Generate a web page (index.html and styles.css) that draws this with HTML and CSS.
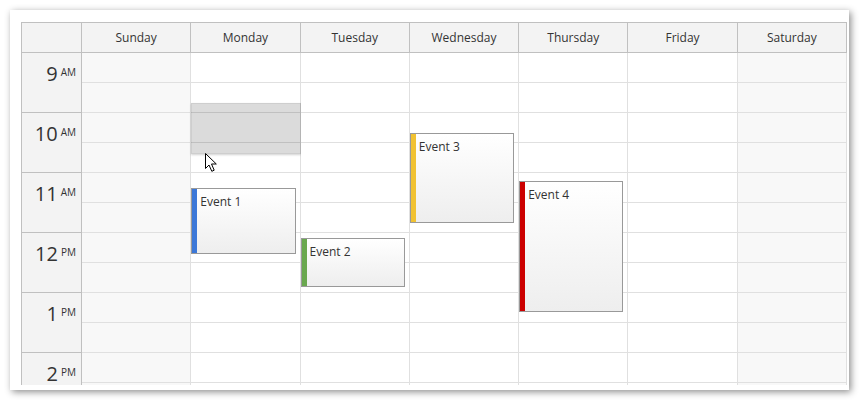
FILE: index.html
```html
<!DOCTYPE html>
<html>
<head>
<meta charset="utf-8">
<link rel="stylesheet" href="styles.css">
</head>
<body>
<div class="frame">
  <div class="cal">
    <div class="header">
      <div class="corner"></div>
      <div class="day-head">Sunday</div>
      <div class="day-head">Monday</div>
      <div class="day-head">Tuesday</div>
      <div class="day-head">Wednesday</div>
      <div class="day-head">Thursday</div>
      <div class="day-head">Friday</div>
      <div class="day-head">Saturday</div>
    </div>
    <div class="body">
      <div class="times">
        <div class="hour"><span class="num">9</span><span class="ampm">AM</span></div>
        <div class="hour"><span class="num">10</span><span class="ampm">AM</span></div>
        <div class="hour"><span class="num">11</span><span class="ampm">AM</span></div>
        <div class="hour"><span class="num">12</span><span class="ampm">PM</span></div>
        <div class="hour"><span class="num">1</span><span class="ampm">PM</span></div>
        <div class="hour"><span class="num">2</span><span class="ampm">PM</span></div>
      </div>
      <div class="day weekend">
        <div class="slot"></div><div class="slot"></div><div class="slot"></div><div class="slot"></div><div class="slot"></div><div class="slot"></div><div class="slot"></div><div class="slot"></div><div class="slot"></div><div class="slot"></div><div class="slot"></div><div class="slot"></div>
      </div>
      <div class="day">
        <div class="slot"></div><div class="slot"></div><div class="slot"></div><div class="slot"></div><div class="slot"></div><div class="slot"></div><div class="slot"></div><div class="slot"></div><div class="slot"></div><div class="slot"></div><div class="slot"></div><div class="slot"></div>
        <div class="selection"></div>
        <div class="event ev1"><span class="bar blue"></span>Event 1</div>
      </div>
      <div class="day">
        <div class="slot"></div><div class="slot"></div><div class="slot"></div><div class="slot"></div><div class="slot"></div><div class="slot"></div><div class="slot"></div><div class="slot"></div><div class="slot"></div><div class="slot"></div><div class="slot"></div><div class="slot"></div>
        <div class="event ev2"><span class="bar green"></span>Event 2</div>
      </div>
      <div class="day">
        <div class="slot"></div><div class="slot"></div><div class="slot"></div><div class="slot"></div><div class="slot"></div><div class="slot"></div><div class="slot"></div><div class="slot"></div><div class="slot"></div><div class="slot"></div><div class="slot"></div><div class="slot"></div>
        <div class="event ev3"><span class="bar yellow"></span>Event 3</div>
      </div>
      <div class="day">
        <div class="slot"></div><div class="slot"></div><div class="slot"></div><div class="slot"></div><div class="slot"></div><div class="slot"></div><div class="slot"></div><div class="slot"></div><div class="slot"></div><div class="slot"></div><div class="slot"></div><div class="slot"></div>
        <div class="event ev4"><span class="bar red"></span>Event 4</div>
      </div>
      <div class="day">
        <div class="slot"></div><div class="slot"></div><div class="slot"></div><div class="slot"></div><div class="slot"></div><div class="slot"></div><div class="slot"></div><div class="slot"></div><div class="slot"></div><div class="slot"></div><div class="slot"></div><div class="slot"></div>
      </div>
      <div class="day weekend">
        <div class="slot"></div><div class="slot"></div><div class="slot"></div><div class="slot"></div><div class="slot"></div><div class="slot"></div><div class="slot"></div><div class="slot"></div><div class="slot"></div><div class="slot"></div><div class="slot"></div><div class="slot"></div>
      </div>
    </div>
  </div>
</div>
<svg class="cursor" width="14" height="21" viewBox="0 0 14 21">
  <path d="M1.5 1.5 L1.5 16.5 L5 13 L7.8 19.3 L10.2 18.2 L7.5 12 L12.3 12 Z" fill="#fff" stroke="#000" stroke-width="1" stroke-linejoin="miter"/>
</svg>
</body>
</html>
```

FILE: styles.css
```css
html, body {
  margin: 0;
  padding: 0;
  background: #fff;
}
body {
  font-family: "Open Sans", "Noto Sans", sans-serif;
  color: #333;
  position: relative;
  width: 860px;
  height: 401px;
  overflow: hidden;
}
.frame {
  margin: 10px 0 0 10px;
  width: 839px;
  height: 380px;
  box-sizing: border-box;
  padding: 12px 2px 5px 11px;
  background: #fff;
  box-shadow: 2px 2px 7px rgba(0, 0, 0, 0.45);
}
.cal {
  width: 825px;
  height: 362px;
  overflow: hidden;
  border-top: 1px solid #c0c0c0;
  border-left: 1px solid #c0c0c0;
}
.header, .body {
  display: grid;
  grid-template-columns: 60px repeat(7, 1fr);
  width: 825px;
}
.header {
  height: 30px;
  background: #f3f3f3;
}
.corner, .day-head {
  box-sizing: border-box;
  border-right: 1px solid #c0c0c0;
  border-bottom: 1px solid #c0c0c0;
}
.day-head {
  font-size: 12px;
  line-height: 29px;
  text-align: center;
  color: #333;
}
.body {
  height: 332px;
  overflow: hidden;
}
.times {
  background: #f3f3f3;
  border-right: 1px solid #c0c0c0;
  box-sizing: border-box;
}
.hour {
  height: 60px;
  box-sizing: border-box;
  border-bottom: 1px solid #c0c0c0;
  display: flex;
  justify-content: flex-end;
  align-items: flex-start;
  padding: 11px 5px 0 0;
}
.num {
  font-size: 20px;
  line-height: 20px;
  color: #333;
}
.ampm {
  font-size: 10px;
  line-height: 10px;
  margin-left: 3px;
  margin-top: 3px;
  color: #333;
}
.day {
  position: relative;
  border-right: 1px solid #e0e0e0;
  box-sizing: border-box;
  background: #fff;
}
.day.weekend {
  background: #f8f8f8;
}
.slot {
  height: 30px;
  box-sizing: border-box;
  border-bottom: 1px solid #e0e0e0;
}
.selection {
  position: absolute;
  left: 0;
  right: -1px;
  top: 50px;
  height: 51px;
  box-sizing: border-box;
  background: rgba(0, 0, 0, 0.14);
  border: 1px solid rgba(0, 0, 0, 0.06);
  box-shadow: 0 1px 2px rgba(0, 0, 0, 0.18);
}
.event {
  position: absolute;
  left: 0;
  right: 4px;
  box-sizing: border-box;
  border: 1px solid #999;
  background: linear-gradient(to bottom, #fff, #eee);
  font-size: 12px;
  line-height: 16px;
  color: #333;
  padding: 5px 4px 0 8px;
  overflow: hidden;
}
.bar {
  position: absolute;
  left: -1px;
  top: -1px;
  bottom: -1px;
  width: 6px;
}
.blue { background: #3c78d8; }
.green { background: #6aa84f; }
.yellow { background: #f1c232; }
.red { background: #cc0000; }
.ev1 { top: 135px; height: 66px; }
.ev2 { top: 185px; height: 49px; }
.ev3 { top: 80px; height: 90px; }
.ev4 { top: 128px; height: 131px; }
.cursor {
  position: absolute;
  left: 204px;
  top: 152px;
}
```
